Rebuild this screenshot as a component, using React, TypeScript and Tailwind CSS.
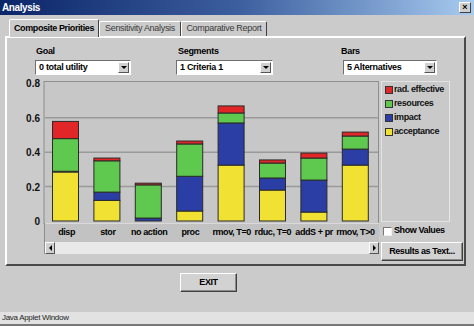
import React from "react";

const FONT = { fontFamily: '"Liberation Sans", Arial, sans-serif' };

const SERIES = [
  { name: "acceptance", color: "#f1e132" },
  { name: "impact", color: "#2b3ea6" },
  { name: "resources", color: "#5fc84f" },
  { name: "rad. effective", color: "#e02626" },
];

const BARS = [
  { label: "disp", v: [0.285, 0.004, 0.19, 0.1] },
  { label: "stor", v: [0.12, 0.048, 0.182, 0.016] },
  { label: "no action", v: [0, 0.017, 0.193, 0.01] },
  { label: "proc", v: [0.058, 0.202, 0.188, 0.017] },
  { label: "rmov, T=0", v: [0.325, 0.245, 0.058, 0.041] },
  { label: "rduc, T=0", v: [0.18, 0.07, 0.087, 0.018] },
  { label: "addS + pr", v: [0.052, 0.186, 0.128, 0.029] },
  { label: "rmov, T>0", v: [0.325, 0.093, 0.076, 0.023] },
];

const PLOT_X = 37;
const ZERO_Y = 140;
const SCALE = 172;

function Chart() {
  return (
    <svg width={372} height={142} className="block overflow-visible">
      <rect x={PLOT_X} y={0.5} width={334.5} height={142} fill="#c7c7c7" stroke="#8e8e8e" />
      {[0.2, 0.4, 0.6].map((t) => (
        <line
          key={t}
          x1={PLOT_X + 1}
          x2={371}
          y1={ZERO_Y - t * SCALE}
          y2={ZERO_Y - t * SCALE}
          stroke="#9a9a9a"
          strokeWidth={1.5}
        />
      ))}
      {[0, 0.2, 0.4, 0.6, 0.8].map((t) => (
        <text
          key={t}
          x={33}
          y={ZERO_Y - t * SCALE + 4}
          textAnchor="end"
          fontSize={10}
          fontWeight={700}
          fill="#111"
          style={FONT}
        >
          {t === 0 ? "0" : t.toFixed(1)}
        </text>
      ))}
      {BARS.map((b, i) => {
        const x = PLOT_X + 8 + i * 41.4;
        let base = ZERO_Y;
        return (
          <g key={b.label}>
            {b.v.map((val, s) => {
              const h = val * SCALE;
              base -= h;
              if (h <= 0) return null;
              return (
                <rect
                  key={s}
                  x={x + 0.5}
                  y={base}
                  width={26}
                  height={h}
                  fill={SERIES[s].color}
                  stroke="#2a2a2a"
                  strokeWidth={1}
                />
              );
            })}
          </g>
        );
      })}
    </svg>
  );
}

function Dropdown({ text }: { text: string }) {
  return (
    <div className="flex h-[15px] w-full border border-t-[#6f6f6f] border-l-[#6f6f6f] border-r-white border-b-white bg-white">
      <div className="flex flex-1 items-center pl-[3px] text-[9px] font-bold tracking-[-0.3px] text-black">{text}</div>
      <div className="m-[1px] flex w-[11px] items-center justify-center border border-t-white border-l-white border-r-[#555] border-b-[#555] bg-[#d0d0d0]">
        <div className="h-0 w-0 border-x-[3px] border-t-[3px] border-x-transparent border-t-black" />
      </div>
    </div>
  );
}

function RaisedButton({ children, className }: { children: React.ReactNode; className: string }) {
  return (
    <div
      className={
        "flex items-center justify-center border border-t-white border-l-white border-r-[#404040] border-b-[#404040] bg-[#d2d2d2] text-[9px] font-bold tracking-[-0.4px] text-black shadow-[inset_-1px_-1px_0_#8a8a8a] " +
        className
      }
    >
      {children}
    </div>
  );
}

export default function App() {
  return (
    <div className="flex h-[326px] w-[474px] flex-col overflow-hidden bg-[#cbcbcb]" style={FONT}>
      {/* title bar */}
      <div className="flex h-[15px] items-center justify-between bg-linear-to-r from-[#0b2569] via-[#3d5e9e] to-[#a8cbf0] pl-[2px] pr-[3px]">
        <span className="text-[10px] font-bold tracking-[-0.4px] text-white">Analysis</span>
        <div className="flex h-[11px] w-[12px] items-center justify-center border border-t-white border-l-white border-r-[#404040] border-b-[#404040] bg-[#d0d0d0] text-[9px] font-bold leading-none text-black">
          ×
        </div>
      </div>

      {/* tabs */}
      <div className="mt-[4px] flex h-[17px] items-end pl-[9px]">
        <div className="relative z-10 -mb-px flex h-[18px] w-[90px] items-center justify-center rounded-t-[2px] border border-b-0 border-t-white border-l-white border-r-[#404040] bg-[#cbcbcb] text-[9px] font-bold tracking-[-0.4px] text-black">
          Composite Priorities
        </div>
        <div className="flex h-[15px] w-[82px] items-center justify-center rounded-t-[2px] border border-b-0 border-t-white border-l-white border-r-[#404040] text-[9px] tracking-[-0.3px] text-[#3a3a3a]">
          Sensitivity Analysis
        </div>
        <div className="flex h-[15px] w-[86px] items-center justify-center rounded-t-[2px] border border-b-0 border-t-white border-l-white border-r-[#404040] text-[9px] tracking-[-0.3px] text-[#3a3a3a]">
          Comparative Report
        </div>
      </div>

      {/* tab panel */}
      <div className="ml-[5px] flex h-[230px] w-[461px] flex-col border-2 border-t-white border-l-white border-r-[#4a4a4a] border-b-[#4a4a4a]">
        <div className="mt-[8px] flex">
          <div className="ml-[28px] w-[96px]">
            <div className="h-[11px] pl-[1px] text-[9px] font-bold leading-[11px] tracking-[-0.3px] text-black">Goal</div>
            <div className="mt-[3px]">
              <Dropdown text="0 total utility" />
            </div>
          </div>
          <div className="ml-[45px] w-[97px]">
            <div className="h-[11px] pl-[2px] text-[9px] font-bold leading-[11px] tracking-[-0.3px] text-black">Segments</div>
            <div className="mt-[3px]">
              <Dropdown text="1 Criteria 1" />
            </div>
          </div>
          <div className="ml-[68px] w-[96px]">
            <div className="h-[11px] text-[9px] font-bold leading-[11px] tracking-[-0.3px] text-black">Bars</div>
            <div className="mt-[3px] pl-[2px]">
              <Dropdown text="5 Alternatives" />
            </div>
          </div>
        </div>

        {/* chart area */}
        <div className="mt-[6px] flex">
          <div className="flex w-[372px] flex-col">
            <Chart />
            <div className="ml-[37px] w-[335px] border-l border-[#8e8e8e]">
              <div className="grid h-[19px] grid-cols-8 border-t border-[#dadada] bg-[#c2c2c2] pl-[1px] pr-[3px]">
                {BARS.map((b) => (
                  <div key={b.label} className="flex items-center justify-center whitespace-nowrap text-[9px] font-bold tracking-[-0.4px] text-black">
                    {b.label}
                  </div>
                ))}
              </div>
              <div className="flex h-[12px] bg-[#e9e9e9]">
                <div className="flex w-[10px] items-center justify-center border border-t-white border-l-white border-r-[#555] border-b-[#555] bg-[#d0d0d0]">
                  <div className="h-0 w-0 border-y-[3px] border-r-[3px] border-y-transparent border-r-black" />
                </div>
                <div className="flex-1" />
                <div className="flex w-[10px] items-center justify-center border border-t-white border-l-white border-r-[#555] border-b-[#555] bg-[#d0d0d0]">
                  <div className="h-0 w-0 border-y-[3px] border-l-[3px] border-y-transparent border-l-black" />
                </div>
              </div>
            </div>
          </div>

          <div className="ml-[2px] flex w-[84px] flex-col">
            <div className="flex h-[141px] w-[69px] flex-col gap-[4px] border border-[#e2e2e2] border-r-[#e8e8e8] bg-[#c9c9c9] pl-[3px] pt-[3px]">
              {[...SERIES].reverse().map((s) => (
                <div key={s.name} className="flex h-[10px] items-center gap-[1px]">
                  <div className="h-[8px] w-[8px] border border-[#333]" style={{ backgroundColor: s.color }} />
                  <span className="whitespace-nowrap text-[9px] font-bold tracking-[-0.4px] text-[#111]">{s.name}</span>
                </div>
              ))}
            </div>
            <div className="mt-[4px] flex h-[10px] items-center gap-[2px] pl-[2px]">
              <div className="h-[9px] w-[9px] border border-t-[#777] border-l-[#777] border-r-[#eee] border-b-[#eee] bg-white" />
              <span className="text-[9px] font-bold tracking-[-0.4px] text-black">Show Values</span>
            </div>
            <RaisedButton className="mt-[6px] h-[19px] w-[82px]">Results as Text...</RaisedButton>
          </div>
        </div>
      </div>

      {/* exit */}
      <div className="mt-[7px] pl-[180px]">
        <RaisedButton className="h-[19px] w-[57px]">EXIT</RaisedButton>
      </div>

      <div className="flex-1" />
      {/* status bar */}
      <div className="flex h-[12px] items-center bg-[#e2e2e2] pl-[2px] text-[8px] tracking-[-0.3px] text-[#222]">
        Java Applet Window
      </div>
      <div className="h-[2px] bg-[#777]" />
    </div>
  );
}
